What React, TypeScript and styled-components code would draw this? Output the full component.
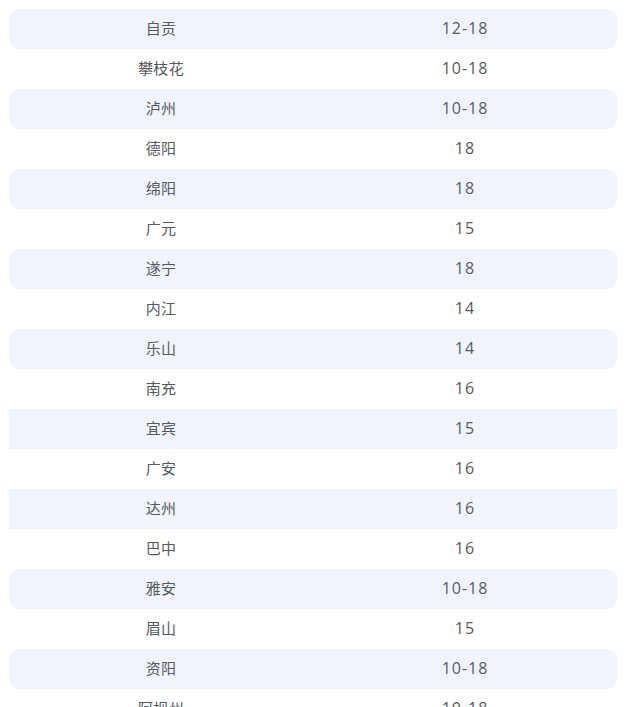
import React from "react";
import styled, { createGlobalStyle } from "styled-components";

const GlobalStyle = createGlobalStyle`
  body {
    margin: 0;
    background: #fff;
    font-family: "Open Sans", "Noto Sans CJK SC", sans-serif;
  }
`;

const Table = styled.div`
  display: flex;
  flex-direction: column;
  padding: 9px 16px 0 9px;
`;

const Row = styled.div<{ $striped: boolean; $square: boolean }>`
  display: grid;
  grid-template-columns: 1fr 1fr;
  height: 40px;
  align-items: center;
  padding-bottom: 2px;
  box-sizing: border-box;
  background: ${(p) => (p.$striped ? "#f1f4fd" : "transparent")};
  border-radius: ${(p) => (p.$square ? "0" : "10px")};
`;

const Cell = styled.div<{ $num?: boolean }>`
  text-align: center;
  font-size: ${(p) => (p.$num ? "16px" : "15px")};
  color: #555a60;
  letter-spacing: ${(p) => (p.$num ? "1px" : "0.3px")};
  line-height: 1;
`;

const data: [string, string][] = [
  ["自贡", "12-18"],
  ["攀枝花", "10-18"],
  ["泸州", "10-18"],
  ["德阳", "18"],
  ["绵阳", "18"],
  ["广元", "15"],
  ["遂宁", "18"],
  ["内江", "14"],
  ["乐山", "14"],
  ["南充", "16"],
  ["宜宾", "15"],
  ["广安", "16"],
  ["达州", "16"],
  ["巴中", "16"],
  ["雅安", "10-18"],
  ["眉山", "15"],
  ["资阳", "10-18"],
  ["阿坝州", "10-18"],
];

const squareRows = ["宜宾", "达州"];

export default function App() {
  return (
    <>
      <GlobalStyle />
      <Table>
        {data.map(([city, value], i) => (
          <Row key={city} $striped={i % 2 === 0} $square={squareRows.includes(city)}>
            <Cell>{city}</Cell>
            <Cell $num>{value}</Cell>
          </Row>
        ))}
      </Table>
    </>
  );
}
